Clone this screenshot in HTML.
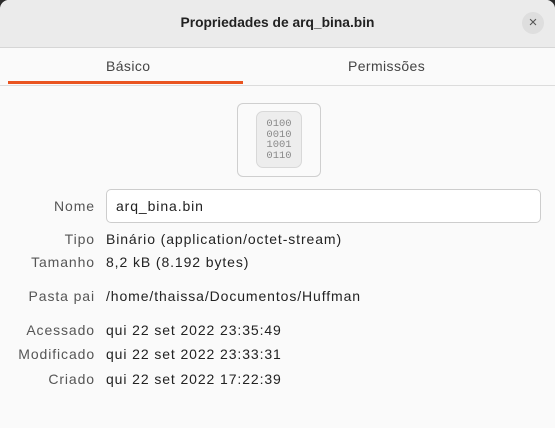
<!DOCTYPE html>
<html><head><style>
body{margin:0;width:555px;height:428px;background:#2b2b2b;font-family:"Liberation Sans",sans-serif;overflow:hidden;position:relative}
.win{position:absolute;left:0;top:0;width:555px;height:428px;background:#fafafa;border-radius:9px 9px 0 0;overflow:hidden}
.tb{position:absolute;left:0;top:0;width:555px;height:47px;background:#ebebeb;border-bottom:1px solid #d6d6d6}
.title{position:absolute;left:0;width:555px;top:15px;text-align:center;font-weight:bold;font-size:13.8px;color:#222}
.close{position:absolute;left:522px;top:12px;width:22px;height:22px;border-radius:50%;background:#dedede;text-align:center;line-height:22px;font-size:15px;color:#555}
.tabs{position:absolute;top:48px;left:0;width:555px;height:37px;border-bottom:1px solid #dcdcdc;background:#fafafa}
.tab{position:absolute;top:10px;font-size:14px;color:#444;letter-spacing:0.4px}
.ul{position:absolute;left:8px;top:33px;width:235px;height:3px;background:#e95420}
.icon{position:absolute;left:237px;top:103px;width:82px;height:72px;border:1px solid #cfcfcf;border-radius:6px;background:#fafafa}
.doc{position:absolute;left:18px;top:7px;width:46px;height:57px;border:1px solid #d8d8d8;border-radius:7px;background:#ededed;font-family:"Liberation Mono",monospace;font-size:10.5px;line-height:10.5px;color:#8a8a8a;text-align:center;padding-top:7px;box-sizing:border-box}
.lab{position:absolute;right:460px;font-size:14px;color:#555;text-align:right;letter-spacing:0.9px}
.val{position:absolute;left:106px;font-size:14px;color:#222;letter-spacing:0.9px}
.entry{position:absolute;left:106px;top:189px;width:433px;height:32px;border:1px solid #cdcdcd;border-radius:5px;background:#fff}
</style></head><body>
<div class="win">
<div class="tb"><div class="title">Propriedades de arq_bina.bin</div><div class="close">×</div></div>
<div class="tabs"><div class="tab" style="left:106px">Básico</div><div class="tab" style="left:348px">Permissões</div><div class="ul"></div></div>
<div class="icon"><div class="doc">0100<br>0010<br>1001<br>0110</div></div>
<div class="lab" style="top:198px">Nome</div>
<div class="entry"></div><div class="val" style="left:116px;top:198px">arq_bina.bin</div>
<div class="lab" style="top:231px">Tipo</div><div class="val" style="top:231px">Binário (application/octet-stream)</div>
<div class="lab" style="top:254px">Tamanho</div><div class="val" style="top:254px">8,2 kB (8.192 bytes)</div>
<div class="lab" style="top:288px">Pasta pai</div><div class="val" style="top:288px">/home/thaissa/Documentos/Huffman</div>
<div class="lab" style="top:322px">Acessado</div><div class="val" style="top:322px">qui 22 set 2022 23:35:49</div>
<div class="lab" style="top:346px">Modificado</div><div class="val" style="top:346px">qui 22 set 2022 23:33:31</div>
<div class="lab" style="top:371px">Criado</div><div class="val" style="top:371px">qui 22 set 2022 17:22:39</div>
</div>
</body></html>
